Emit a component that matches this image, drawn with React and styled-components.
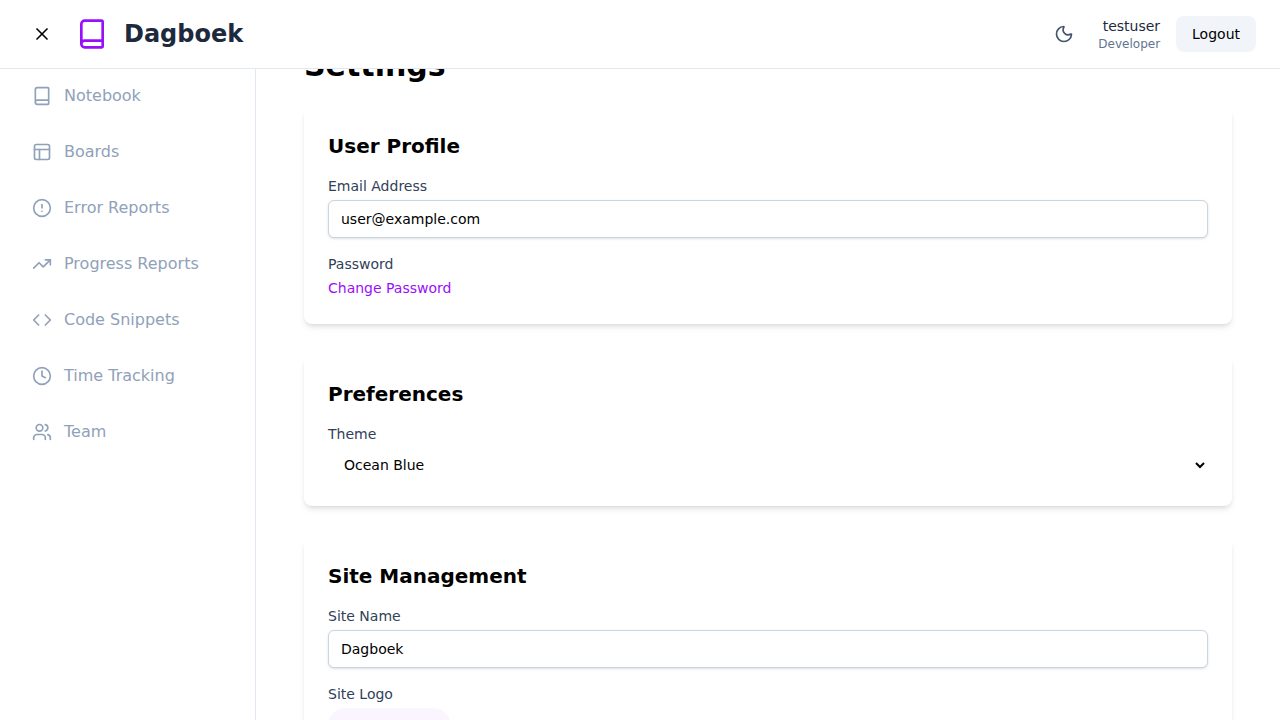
import React, { useState } from 'react';
import styled, { createGlobalStyle } from 'styled-components';
import {
  Book,
  CircleAlert,
  Clock,
  Code,
  Moon,
  PanelsTopLeft,
  TrendingUp,
  Users,
  X,
} from 'lucide-react';

const GlobalStyle = createGlobalStyle`
  *, *::before, *::after { box-sizing: border-box; }
  body {
    margin: 0;
    background: #ffffff;
    color: #000000;
    font-family: "DejaVu Sans", sans-serif;
    font-size: 16px;
    line-height: 24px;
  }
  h1, h2, p, ul { margin: 0; padding: 0; }
  button, input, select { font: inherit; color: inherit; }
  button { border: 0; cursor: pointer; }
  svg { display: block; flex-shrink: 0; }
`;

const Shell = styled.div`
  display: flex;
  height: 100vh;
  overflow: hidden;
`;

const Header = styled.header`
  position: fixed;
  inset: 0 0 auto 0;
  z-index: 10;
  display: flex;
  align-items: center;
  justify-content: space-between;
  padding: 16px 24px;
  background: #ffffff;
  border-bottom: 1px solid #e2e8f0;
`;

const HeaderGroup = styled.div`
  display: flex;
  align-items: center;
  gap: 16px;
`;

const IconButton = styled.button`
  padding: 8px;
  border-radius: 8px;
  background: transparent;
  color: ${({ $muted }) => ($muted ? '#45556c' : '#000000')};
`;

const Brand = styled.span`
  font-size: 24px;
  font-weight: 700;
  line-height: 32px;
  color: #1d293d;
`;

const UserInfo = styled.div`
  text-align: right;
`;

const UserName = styled.p`
  font-size: 14px;
  line-height: 20px;
  color: #1d293d;
`;

const UserRole = styled.p`
  font-size: 12px;
  line-height: 16px;
  color: #62748e;
`;

const LogoutButton = styled.button`
  padding: 8px 16px;
  border-radius: 8px;
  background: #f1f5f9;
  font-size: 14px;
  line-height: 20px;
`;

const Sidebar = styled.nav`
  flex: 0 0 256px;
  padding: 72px 16px 16px;
  border-right: 1px solid #e2e8f0;
  background: #ffffff;
`;

const NavList = styled.ul`
  display: flex;
  flex-direction: column;
  gap: 8px;
  list-style: none;
`;

const NavLink = styled.a`
  display: flex;
  align-items: center;
  gap: 12px;
  padding: 12px 16px;
  border-radius: 8px;
  color: #90a1b9;
  text-decoration: none;
`;

const Main = styled.main`
  flex: 1;
  min-width: 0;
  padding: 48px;
  overflow-y: auto;
  scrollbar-width: none;
`;

const PageTitle = styled.h1`
  margin-bottom: 24px;
  font-size: 30px;
  line-height: 36px;
`;

const Sections = styled.div`
  display: flex;
  flex-direction: column;
  gap: 32px;
`;

const Card = styled.section`
  padding: 24px;
  border-radius: 8px;
  background: #ffffff;
  box-shadow: 0 4px 6px -1px rgb(0 0 0 / 0.1), 0 2px 4px -2px rgb(0 0 0 / 0.1);
`;

const CardTitle = styled.h2`
  margin-bottom: 16px;
  font-size: 20px;
  line-height: 28px;
`;

const Fields = styled.div`
  display: flex;
  flex-direction: column;
  gap: 16px;
`;

const Field = styled.div`
  display: flex;
  flex-direction: column;
  align-items: flex-start;
  gap: ${({ $tight }) => ($tight ? '2px' : '4px')};
  font-size: 14px;
  line-height: 20px;
`;

const Label = styled.label`
  color: #314158;
`;

const TextInput = styled.input`
  width: 100%;
  padding: 8px 12px;
  height: 38px;
  border: 1px solid #cad5e2;
  border-radius: 6px;
  background: #ffffff;
  box-shadow: 0 1px 3px rgb(0 0 0 / 0.1), 0 1px 2px -1px rgb(0 0 0 / 0.1);
`;

const Select = styled.select`
  width: 100%;
  height: 34px;
  padding: 0 0 0 12px;
  border: 0;
  border-radius: 6px;
  background: #ffffff;
`;

const TextButton = styled.button`
  padding: 0;
  background: none;
  line-height: 24px;
  color: #9810fa;
`;

const FileInput = styled.input`
  width: 100%;
  color: #62748e;

  &::file-selector-button {
    margin-right: 16px;
    padding: 8px 16px;
    border: 0;
    border-radius: 18px;
    background: #faf5ff;
    color: #8200db;
    font: inherit;
    font-weight: 600;
  }
`;

const navItems = [
  { label: 'Notebook', Icon: Book },
  { label: 'Boards', Icon: PanelsTopLeft },
  { label: 'Error Reports', Icon: CircleAlert },
  { label: 'Progress Reports', Icon: TrendingUp },
  { label: 'Code Snippets', Icon: Code },
  { label: 'Time Tracking', Icon: Clock },
  { label: 'Team', Icon: Users },
];

export default function App() {
  const [email, setEmail] = useState('user@example.com');
  const [siteName, setSiteName] = useState('Dagboek');

  return (
    <>
      <GlobalStyle />
      <Header>
        <HeaderGroup>
          <IconButton type="button" aria-label="Close menu">
            <X size={20} />
          </IconButton>
          <Book size={32} color="#9810fa" />
          <Brand>{siteName}</Brand>
        </HeaderGroup>
        <HeaderGroup>
          <IconButton type="button" aria-label="Toggle dark mode" $muted>
            <Moon size={20} />
          </IconButton>
          <UserInfo>
            <UserName>testuser</UserName>
            <UserRole>Developer</UserRole>
          </UserInfo>
          <LogoutButton type="button">Logout</LogoutButton>
        </HeaderGroup>
      </Header>
      <Shell>
        <Sidebar>
          <NavList>
            {navItems.map(({ label, Icon }) => (
              <li key={label}>
                <NavLink href="#">
                  <Icon size={20} />
                  {label}
                </NavLink>
              </li>
            ))}
          </NavList>
        </Sidebar>
        <Main>
          <PageTitle>Settings</PageTitle>
          <Sections>
            <Card>
              <CardTitle>User Profile</CardTitle>
              <Fields>
                <Field>
                  <Label htmlFor="email">Email Address</Label>
                  <TextInput
                    id="email"
                    type="email"
                    value={email}
                    onChange={(e) => setEmail(e.target.value)}
                  />
                </Field>
                <Field $tight>
                  <Label htmlFor="password">Password</Label>
                  <TextButton id="password" type="button">Change Password</TextButton>
                </Field>
              </Fields>
            </Card>
            <Card>
              <CardTitle>Preferences</CardTitle>
              <Field>
                <Label htmlFor="theme">Theme</Label>
                <Select id="theme" defaultValue="ocean">
                  <option value="ocean">Ocean Blue</option>
                </Select>
              </Field>
            </Card>
            <Card>
              <CardTitle>Site Management</CardTitle>
              <Fields>
                <Field>
                  <Label htmlFor="site-name">Site Name</Label>
                  <TextInput
                    id="site-name"
                    type="text"
                    value={siteName}
                    onChange={(e) => setSiteName(e.target.value)}
                  />
                </Field>
                <Field>
                  <Label htmlFor="site-logo">Site Logo</Label>
                  <FileInput id="site-logo" type="file" accept="image/*" />
                </Field>
              </Fields>
            </Card>
          </Sections>
        </Main>
      </Shell>
    </>
  );
}
